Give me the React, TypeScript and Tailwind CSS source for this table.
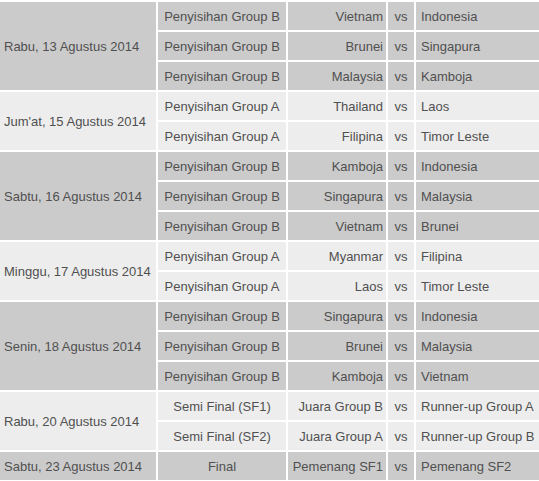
import React from 'react';

type Match = { stage: string; home: string; away: string };
type Day = { date: string; matches: Match[] };

const days: Day[] = [
  {
    date: 'Rabu, 13 Agustus 2014',
    matches: [
      { stage: 'Penyisihan Group B', home: 'Vietnam', away: 'Indonesia' },
      { stage: 'Penyisihan Group B', home: 'Brunei', away: 'Singapura' },
      { stage: 'Penyisihan Group B', home: 'Malaysia', away: 'Kamboja' },
    ],
  },
  {
    date: "Jum'at, 15 Agustus 2014",
    matches: [
      { stage: 'Penyisihan Group A', home: 'Thailand', away: 'Laos' },
      { stage: 'Penyisihan Group A', home: 'Filipina', away: 'Timor Leste' },
    ],
  },
  {
    date: 'Sabtu, 16 Agustus 2014',
    matches: [
      { stage: 'Penyisihan Group B', home: 'Kamboja', away: 'Indonesia' },
      { stage: 'Penyisihan Group B', home: 'Singapura', away: 'Malaysia' },
      { stage: 'Penyisihan Group B', home: 'Vietnam', away: 'Brunei' },
    ],
  },
  {
    date: 'Minggu, 17 Agustus 2014',
    matches: [
      { stage: 'Penyisihan Group A', home: 'Myanmar', away: 'Filipina' },
      { stage: 'Penyisihan Group A', home: 'Laos', away: 'Timor Leste' },
    ],
  },
  {
    date: 'Senin, 18 Agustus 2014',
    matches: [
      { stage: 'Penyisihan Group B', home: 'Singapura', away: 'Indonesia' },
      { stage: 'Penyisihan Group B', home: 'Brunei', away: 'Malaysia' },
      { stage: 'Penyisihan Group B', home: 'Kamboja', away: 'Vietnam' },
    ],
  },
  {
    date: 'Rabu, 20 Agustus 2014',
    matches: [
      { stage: 'Semi Final (SF1)', home: 'Juara Group B', away: 'Runner-up Group A' },
      { stage: 'Semi Final (SF2)', home: 'Juara Group A', away: 'Runner-up Group B' },
    ],
  },
  {
    date: 'Sabtu, 23 Agustus 2014',
    matches: [{ stage: 'Final', home: 'Pemenang SF1', away: 'Pemenang SF2' }],
  },
];

export default function App() {
  return (
    <div className="w-[539px] h-[481px] overflow-hidden bg-white">
      <table
        className="table-fixed border-separate border-spacing-[2px] -ml-[2px] w-[545px] text-[13px] leading-[15px] text-[#505050]"
        style={{ fontFamily: '"Liberation Sans", Arial, sans-serif' }}
      >
        <colgroup>
          <col className="w-[156px]" />
          <col className="w-[128px]" />
          <col className="w-[98px]" />
          <col className="w-[26px]" />
          <col className="w-[125px]" />
        </colgroup>
        <tbody>
          {days.map((day, di) => {
            // alternate day groups: dark / light grey
            const bg = di % 2 === 0 ? 'bg-[#cbcbcb]' : 'bg-[#ededed]';
            return day.matches.map((m, mi) => (
              <tr key={`${di}-${mi}`}>
                {mi === 0 && (
                  <td rowSpan={day.matches.length} className={`${bg} pl-[4px] align-middle whitespace-nowrap`}>
                    {day.date}
                  </td>
                )}
                <td className={`${bg} h-[28px] p-0 text-center align-middle whitespace-nowrap`}>{m.stage}</td>
                <td className={`${bg} h-[28px] pr-[3px] text-right align-middle whitespace-nowrap`}>{m.home}</td>
                <td className={`${bg} h-[28px] p-0 text-center align-middle`}>vs</td>
                <td className={`${bg} h-[28px] pl-[5px] text-left align-middle whitespace-nowrap`}>{m.away}</td>
              </tr>
            ));
          })}
        </tbody>
      </table>
    </div>
  );
}
